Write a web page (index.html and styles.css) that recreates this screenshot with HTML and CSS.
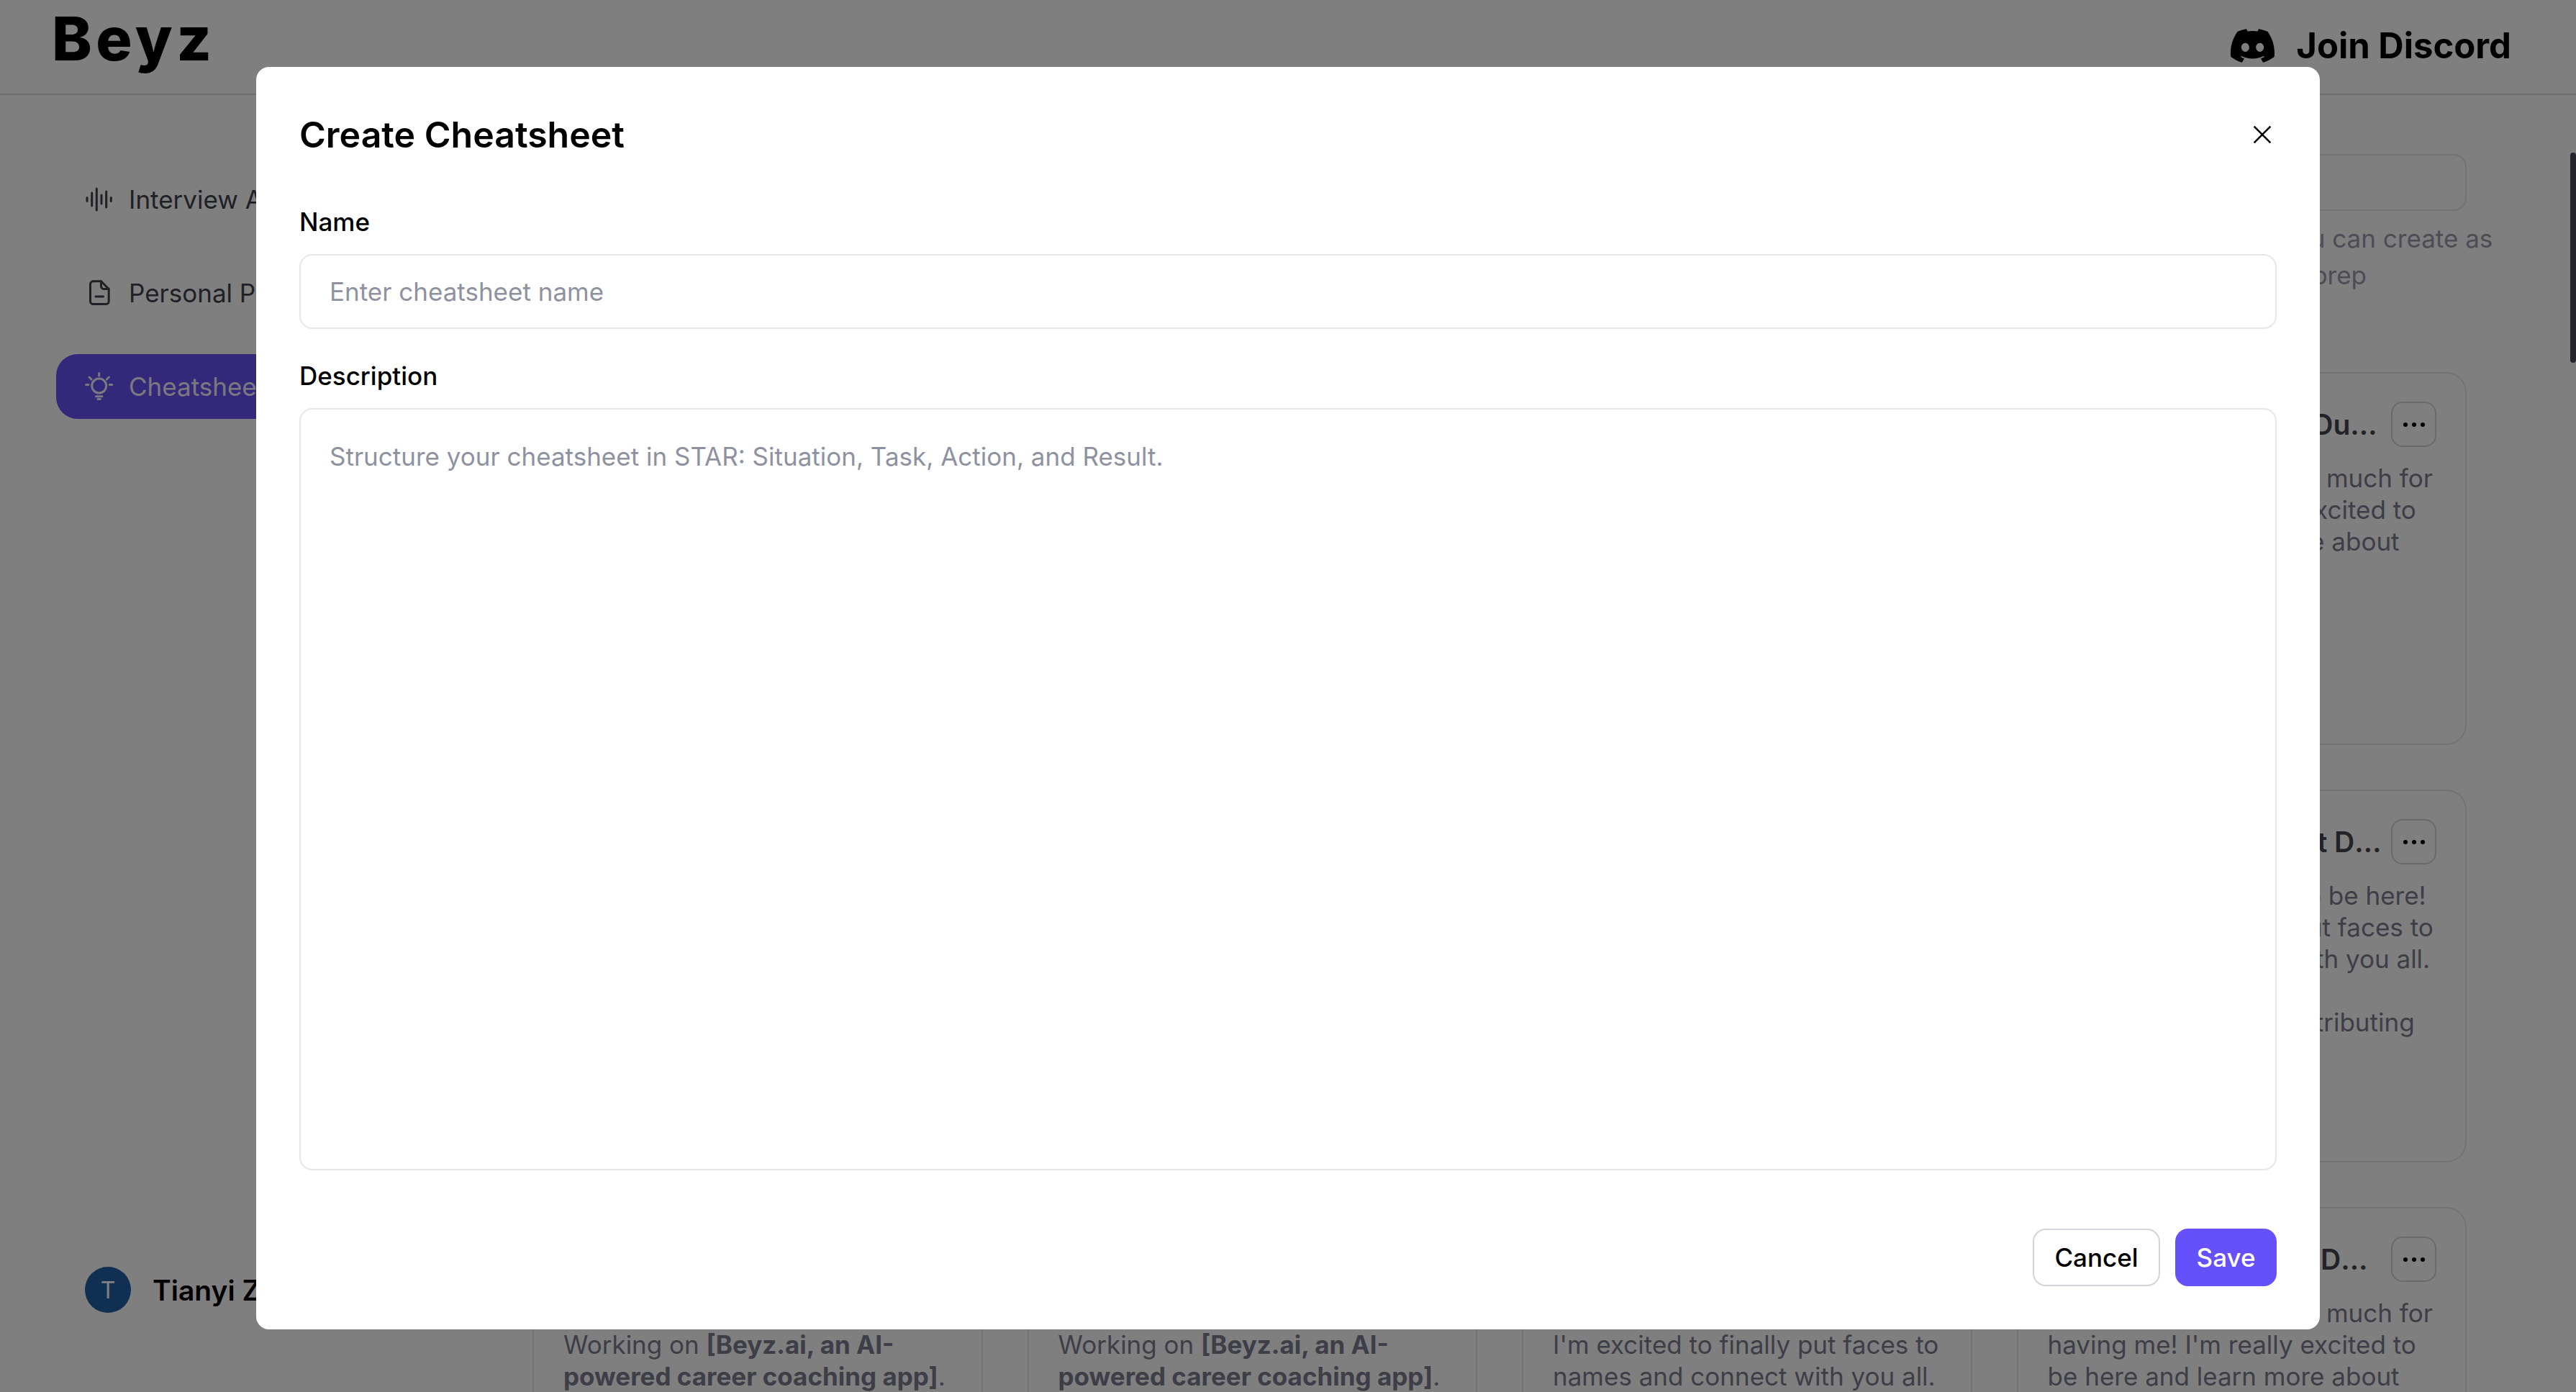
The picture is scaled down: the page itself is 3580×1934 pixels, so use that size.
FILE: index.html
```html
<!DOCTYPE html>
<html lang="en">
<head>
    <meta charset="UTF-8">
    <meta name="viewport" content="width=device-width, initial-scale=1.0">
    <title>Create Cheatsheet</title>
    <link rel="stylesheet" href="styles.css">
</head>
<body>
    <header class="top-bar">
        <div class="logo">Beyz</div>
        <a class="discord-link">
            <svg class="discord-icon" viewBox="0 0 24 24" fill="#000"><path d="M20.317 4.3698a19.7913 19.7913 0 00-4.8851-1.5152.0741.0741 0 00-.0785.0371c-.211.3753-.4447.8648-.6083 1.2495-1.8447-.2762-3.68-.2762-5.4868 0-.1636-.3933-.4058-.8742-.6177-1.2495a.077.077 0 00-.0785-.037 19.7363 19.7363 0 00-4.8852 1.515.0699.0699 0 00-.0321.0277C.5334 9.0458-.319 13.5799.0992 18.0578a.0824.0824 0 00.0312.0561c2.0528 1.5076 4.0413 2.4228 5.9929 3.0294a.0777.0777 0 00.0842-.0276c.4616-.6304.8731-1.2952 1.226-1.9942a.076.076 0 00-.0416-.1057c-.6528-.2476-1.2743-.5495-1.8722-.8923a.077.077 0 01-.0076-.1277c.1258-.0943.2517-.1923.3718-.2914a.0743.0743 0 01.0776-.0105c3.9278 1.7933 8.18 1.7933 12.0614 0a.0739.0739 0 01.0785.0095c.1202.099.246.1981.3728.2924a.077.077 0 01-.0066.1276 12.2986 12.2986 0 01-1.873.8914.0766.0766 0 00-.0407.1067c.3604.698.7719 1.3628 1.225 1.9932a.076.076 0 00.0842.0286c1.961-.6067 3.9495-1.5219 6.0023-3.0294a.077.077 0 00.0313-.0552c.5004-5.177-.8382-9.6739-3.5485-13.6604a.061.061 0 00-.0312-.0286zM8.02 15.3312c-1.1825 0-2.1569-1.0857-2.1569-2.419 0-1.3332.9555-2.4189 2.157-2.4189 1.2108 0 2.1757 1.0952 2.1568 2.419 0 1.3332-.9555 2.4189-2.1569 2.4189zm7.9748 0c-1.1825 0-2.1569-1.0857-2.1569-2.419 0-1.3332.9554-2.4189 2.1569-2.4189 1.2108 0 2.1757 1.0952 2.1568 2.419 0 1.3332-.946 2.4189-2.1568 2.4189Z"/></svg>
            <span>Join Discord</span>
        </a>
    </header>

    <div class="page-body">
        <aside class="sidebar">
            <nav class="nav-list">
                <a class="nav-item">
                    <svg class="nav-icon" viewBox="0 0 44 44" fill="none" stroke="currentColor" stroke-width="3" stroke-linecap="round"><path d="M5 19.500v5M11.700 13v18M18.300 7v30M25 16v12M31.700 11v22M38.300 19.500v5"/></svg>
                    <span>Interview Assistant</span>
                </a>
                <a class="nav-item">
                    <svg class="nav-icon" viewBox="0 0 44 44" fill="none" stroke="currentColor" stroke-width="3" stroke-linecap="round" stroke-linejoin="round"><path d="M24.500 5.800H13.500a4 4 0 0 0-4 4V33.500a4 4 0 0 0 4 4H31.200a4 4 0 0 0 4-4V16.500Z"/><path d="M24.500 5.800V12.500a4 4 0 0 0 4 4H35.200"/><path d="M17 27H27.500"/></svg>
                    <span>Personal Prep</span>
                </a>
                <a class="nav-item nav-item-active">
                    <svg class="nav-icon" viewBox="0 0 44 44" fill="none" stroke="currentColor" stroke-width="3" stroke-linecap="round"><circle cx="21.700" cy="21" r="10"/><path d="M21.700 3.500V7M8 9l3 3M35.400 9l-3 3M3.500 19.500H7M36.300 19.500h3.500M17.500 35.700h8.400M20 39.500h3.400"/></svg>
                    <span>Cheatsheets</span>
                </a>
            </nav>
            <div class="user-box">
                <div class="avatar">T</div>
                <span class="user-name">Tianyi Zhang</span>
            </div>
        </aside>

        <main class="main-content">
            <div class="search-box"></div>
            <p class="page-note">Cheatsheets help you keep your best answers, talking points and stories close at hand during every interview, so write them once and reuse them. You can create as<br>many cheatsheets as you need for different roles, companies and interview stages, and keep them up to date as you practice more; just make sure to prep</p>

            <div class="card-grid">
                <div class="card">
                    <div class="card-head">
                        <h3 class="card-title">Self Introduction at Duke University</h3>
                        <button class="more-button"><svg class="more-icon" viewBox="0 0 30 6" fill="#000"><circle cx="3" cy="3" r="3"/><circle cx="15" cy="3" r="3"/><circle cx="27" cy="3" r="3"/></svg></button>
                    </div>
                    <p class="card-text">Hi everyone, thanks so much for<br>having me! I'm really excited to<br>be here and learn more about<br>the team.<br>Working on <b>[Beyz.ai, an AI-<br>powered career coaching app]</b>.</p>
                </div>
                <div class="card">
                    <div class="card-head">
                        <h3 class="card-title">Self Introduction at Duke University</h3>
                        <button class="more-button"><svg class="more-icon" viewBox="0 0 30 6" fill="#000"><circle cx="3" cy="3" r="3"/><circle cx="15" cy="3" r="3"/><circle cx="27" cy="3" r="3"/></svg></button>
                    </div>
                    <p class="card-text">Hi everyone, thanks so much for<br>having me! I'm really excited to<br>be here and learn more about<br>the team.<br>Working on <b>[Beyz.ai, an AI-<br>powered career coaching app]</b>.</p>
                </div>
                <div class="card">
                    <div class="card-head">
                        <h3 class="card-title">Self Introduction at Duke University</h3>
                        <button class="more-button"><svg class="more-icon" viewBox="0 0 30 6" fill="#000"><circle cx="3" cy="3" r="3"/><circle cx="15" cy="3" r="3"/><circle cx="27" cy="3" r="3"/></svg></button>
                    </div>
                    <p class="card-text">Hi everyone, thanks so much for<br>having me! I'm really excited to<br>be here and learn more about<br>the team.</p>
                </div>
                <div class="card">
                    <div class="card-head">
                        <h3 class="card-title">Self Introduction at Duke University</h3>
                        <button class="more-button"><svg class="more-icon" viewBox="0 0 30 6" fill="#000"><circle cx="3" cy="3" r="3"/><circle cx="15" cy="3" r="3"/><circle cx="27" cy="3" r="3"/></svg></button>
                    </div>
                    <p class="card-text">Hi everyone, thanks so much for<br>having me! I'm really excited to<br>be here and learn more about<br>the team.<br>I'm a recent grad and<br>I studied computer</p>
                </div>

                <div class="card">
                    <div class="card-head">
                        <h3 class="card-title">Team Introduction at Duke University</h3>
                        <button class="more-button"><svg class="more-icon" viewBox="0 0 30 6" fill="#000"><circle cx="3" cy="3" r="3"/><circle cx="15" cy="3" r="3"/><circle cx="27" cy="3" r="3"/></svg></button>
                    </div>
                    <p class="card-text">Hi everyone, so glad to be here!<br>I'm excited to finally put faces to<br>names and connect with you all.</p>
                </div>
                <div class="card">
                    <div class="card-head">
                        <h3 class="card-title">Team Introduction at Duke University</h3>
                        <button class="more-button"><svg class="more-icon" viewBox="0 0 30 6" fill="#000"><circle cx="3" cy="3" r="3"/><circle cx="15" cy="3" r="3"/><circle cx="27" cy="3" r="3"/></svg></button>
                    </div>
                    <p class="card-text">Hi everyone, so glad to be here!<br>I'm excited to finally put faces to<br>names and connect with you all.</p>
                </div>
                <div class="card">
                    <div class="card-head">
                        <h3 class="card-title">Team Introduction at Duke University</h3>
                        <button class="more-button"><svg class="more-icon" viewBox="0 0 30 6" fill="#000"><circle cx="3" cy="3" r="3"/><circle cx="15" cy="3" r="3"/><circle cx="27" cy="3" r="3"/></svg></button>
                    </div>
                    <p class="card-text">Hi everyone, so glad to be here!<br>I'm excited to finally put faces to<br>names and connect with you all.</p>
                </div>
                <div class="card">
                    <div class="card-head">
                        <h3 class="card-title">Team Introduction at Duke University</h3>
                        <button class="more-button"><svg class="more-icon" viewBox="0 0 30 6" fill="#000"><circle cx="3" cy="3" r="3"/><circle cx="15" cy="3" r="3"/><circle cx="27" cy="3" r="3"/></svg></button>
                    </div>
                    <p class="card-text">Hi everyone, so glad to be here!<br>I'm excited to finally put faces to<br>names and connect with you all.<br>At this point I'm really<br>looking forward to contributing<br>and learning from all<br>of you and finding<br>ways to help, please</p>
                </div>

                <div class="card">
                    <div class="card-head">
                        <h3 class="card-title">Project Introduction at IDEO Team</h3>
                        <button class="more-button"><svg class="more-icon" viewBox="0 0 30 6" fill="#000"><circle cx="3" cy="3" r="3"/><circle cx="15" cy="3" r="3"/><circle cx="27" cy="3" r="3"/></svg></button>
                    </div>
                    <p class="card-text">Hi everyone, great to meet you.<br>Working on <b>[Beyz.ai, an AI-<br>powered career coaching app]</b>.</p>
                </div>
                <div class="card">
                    <div class="card-head">
                        <h3 class="card-title">Project Introduction at IDEO Team</h3>
                        <button class="more-button"><svg class="more-icon" viewBox="0 0 30 6" fill="#000"><circle cx="3" cy="3" r="3"/><circle cx="15" cy="3" r="3"/><circle cx="27" cy="3" r="3"/></svg></button>
                    </div>
                    <p class="card-text">Hi everyone, great to meet you.<br>Working on <b>[Beyz.ai, an AI-<br>powered career coaching app]</b>.</p>
                </div>
                <div class="card">
                    <div class="card-head">
                        <h3 class="card-title">Team Introduction at IDEO Team</h3>
                        <button class="more-button"><svg class="more-icon" viewBox="0 0 30 6" fill="#000"><circle cx="3" cy="3" r="3"/><circle cx="15" cy="3" r="3"/><circle cx="27" cy="3" r="3"/></svg></button>
                    </div>
                    <p class="card-text">Hi everyone, so glad to be here!<br>I'm excited to finally put faces to<br>names and connect with you all.</p>
                </div>
                <div class="card">
                    <div class="card-head">
                        <h3 class="card-title">Self Introduction at IDEO Team</h3>
                        <button class="more-button"><svg class="more-icon" viewBox="0 0 30 6" fill="#000"><circle cx="3" cy="3" r="3"/><circle cx="15" cy="3" r="3"/><circle cx="27" cy="3" r="3"/></svg></button>
                    </div>
                    <p class="card-text">Hi everyone, thanks so much for<br>having me! I'm really excited to<br>be here and learn more about</p>
                </div>
            </div>
        </main>
    </div>

    <div class="scroll-thumb"></div>

    <div class="modal-backdrop">
        <div class="modal">
            <div class="modal-head">
                <h2 class="modal-title">Create Cheatsheet</h2>
                <svg class="close-icon" viewBox="0 0 24 24" fill="none" stroke="#000" stroke-width="2.400"><path d="M1.500 1.500l21 21M22.500 1.500l-21 21"/></svg>
            </div>
            <label class="field-label field-label-first" for="sheet-name">Name</label>
            <input class="text-input" id="sheet-name" type="text" placeholder="Enter cheatsheet name">
            <label class="field-label" for="sheet-desc">Description</label>
            <textarea class="text-area" id="sheet-desc" placeholder="Structure your cheatsheet in STAR: Situation, Task, Action, and Result."></textarea>
            <div class="modal-footer">
                <button class="cancel-button">Cancel</button>
                <button class="save-button">Save</button>
            </div>
        </div>
    </div>
</body>
</html>
```

FILE: styles.css
```css
* {
    box-sizing: border-box;
}

html, body {
    height: 100%;
}

body {
    margin: 0;
    display: flex;
    flex-direction: column;
    overflow: hidden;
    font-family: Inter, "Liberation Sans", sans-serif;
    background-color: #fff;
    color: #000;
}

.top-bar {
    height: 132px;
    flex-shrink: 0;
    display: flex;
    justify-content: space-between;
    border-bottom: 2px solid #dcdcdc;
    padding: 0 90px 0 72px;
}

.logo {
    font-size: 84px;
    line-height: 107px;
    font-weight: 800;
    letter-spacing: 5.5px;
}

.discord-link {
    display: flex;
    align-items: center;
    gap: 30px;
    height: 126px;
    font-size: 49px;
    font-weight: 700;
}

.discord-icon {
    width: 61px;
    height: 61px;
}

.page-body {
    flex: 1;
    display: flex;
    min-height: 0;
}

.sidebar {
    width: 680px;
    flex-shrink: 0;
    display: flex;
    flex-direction: column;
    justify-content: space-between;
    padding: 100px 0 110px 78px;
}

.nav-list {
    display: flex;
    flex-direction: column;
    gap: 40px;
}

.nav-item {
    height: 90px;
    display: flex;
    align-items: center;
    gap: 19px;
    padding-left: 38px;
    border-radius: 30px;
    font-size: 35px;
    color: #40424e;
}

.nav-item-active {
    background-color: #6650f5;
    color: #f4f2ff;
}

.nav-icon {
    width: 44px;
    height: 44px;
    flex-shrink: 0;
}

.user-box {
    display: flex;
    align-items: center;
    gap: 30px;
    padding-left: 40px;
}

.avatar {
    width: 64px;
    height: 64px;
    border-radius: 50%;
    background-color: #225ea4;
    color: #fff;
    display: flex;
    align-items: center;
    justify-content: center;
    font-size: 32px;
}

.user-name {
    font-size: 39px;
    font-weight: 600;
}

.main-content {
    flex: 1;
    padding: 82px 152px 0 60px;
    min-width: 0;
}

.search-box {
    height: 79px;
    border: 2px solid #e5e5e5;
    border-radius: 18px;
}

.page-note {
    margin: 13px 0 109px;
    font-size: 35px;
    line-height: 51px;
    color: #989aaa;
    white-space: nowrap;
}

.card-grid {
    display: grid;
    grid-template-columns: repeat(4, minmax(0, 1fr));
    grid-auto-rows: 518px;
    gap: 62px;
}

.card {
    border: 2px solid #e5e5e5;
    border-radius: 28px;
    padding: 39px 40px 39px 41px;
}

.card-head {
    display: flex;
    align-items: center;
    gap: 10px;
    height: 63px;
    margin-bottom: 21px;
}

.card-title {
    flex: 1;
    margin: 0;
    min-width: 0;
    font-size: 39px;
    font-weight: 600;
    color: #46474f;
    white-space: nowrap;
    overflow: hidden;
    text-overflow: ellipsis;
}

.more-button {
    width: 63px;
    height: 63px;
    flex-shrink: 0;
    display: flex;
    align-items: center;
    justify-content: center;
    padding: 0;
    border: 2px solid #d4d4d8;
    border-radius: 16px;
    background: none;
}

.more-icon {
    width: 30px;
    height: 6px;
}

.card-text {
    margin: 0;
    font-size: 35px;
    line-height: 44px;
    color: #7a7c8e;
    white-space: nowrap;
}

.scroll-thumb {
    position: absolute;
    top: 212px;
    right: 0;
    width: 8px;
    height: 292px;
    border-radius: 4px;
    background-color: #4a4c5a;
}

.modal-backdrop {
    position: fixed;
    inset: 0;
    padding-top: 6px;
    display: flex;
    align-items: center;
    justify-content: center;
    background-color: rgba(0, 0, 0, 0.5);
}

.modal {
    width: 2868px;
    height: 1754px;
    display: flex;
    flex-direction: column;
    padding: 60px;
    border-radius: 18px;
    background-color: #fff;
}

.modal-head {
    display: flex;
    align-items: center;
    justify-content: space-between;
    height: 68px;
}

.modal-title {
    margin: 0;
    font-size: 50px;
    font-weight: 600;
}

.close-icon {
    width: 26px;
    height: 26px;
    margin-right: 7px;
}

.field-label {
    display: block;
    margin: 43px 0 23px;
    font-size: 35px;
    line-height: 44px;
    font-weight: 500;
}

.field-label-first {
    margin-top: 65px;
}

.text-input,
.text-area {
    width: 100%;
    border: 2px solid #e5e7eb;
    border-radius: 18px;
    padding: 0 40px;
    font-family: inherit;
    font-size: 35px;
    color: #000;
    outline: none;
}

.text-input {
    height: 104px;
    flex-shrink: 0;
}

.text-area {
    flex: 1;
    padding-top: 43px;
    line-height: 44px;
    resize: none;
}

.text-input::placeholder,
.text-area::placeholder {
    color: #8e92a0;
    opacity: 1;
}

.modal-footer {
    display: flex;
    justify-content: flex-end;
    gap: 21px;
    margin-top: 81px;
}

.cancel-button,
.save-button {
    height: 80px;
    border-radius: 18px;
    font-family: inherit;
    font-size: 35px;
    font-weight: 500;
}

.cancel-button {
    width: 177px;
    border: 2px solid #d1d5db;
    background-color: #fff;
    color: #000;
}

.save-button {
    width: 141px;
    border: none;
    background-color: #6650f9;
    color: #fff;
}
```
